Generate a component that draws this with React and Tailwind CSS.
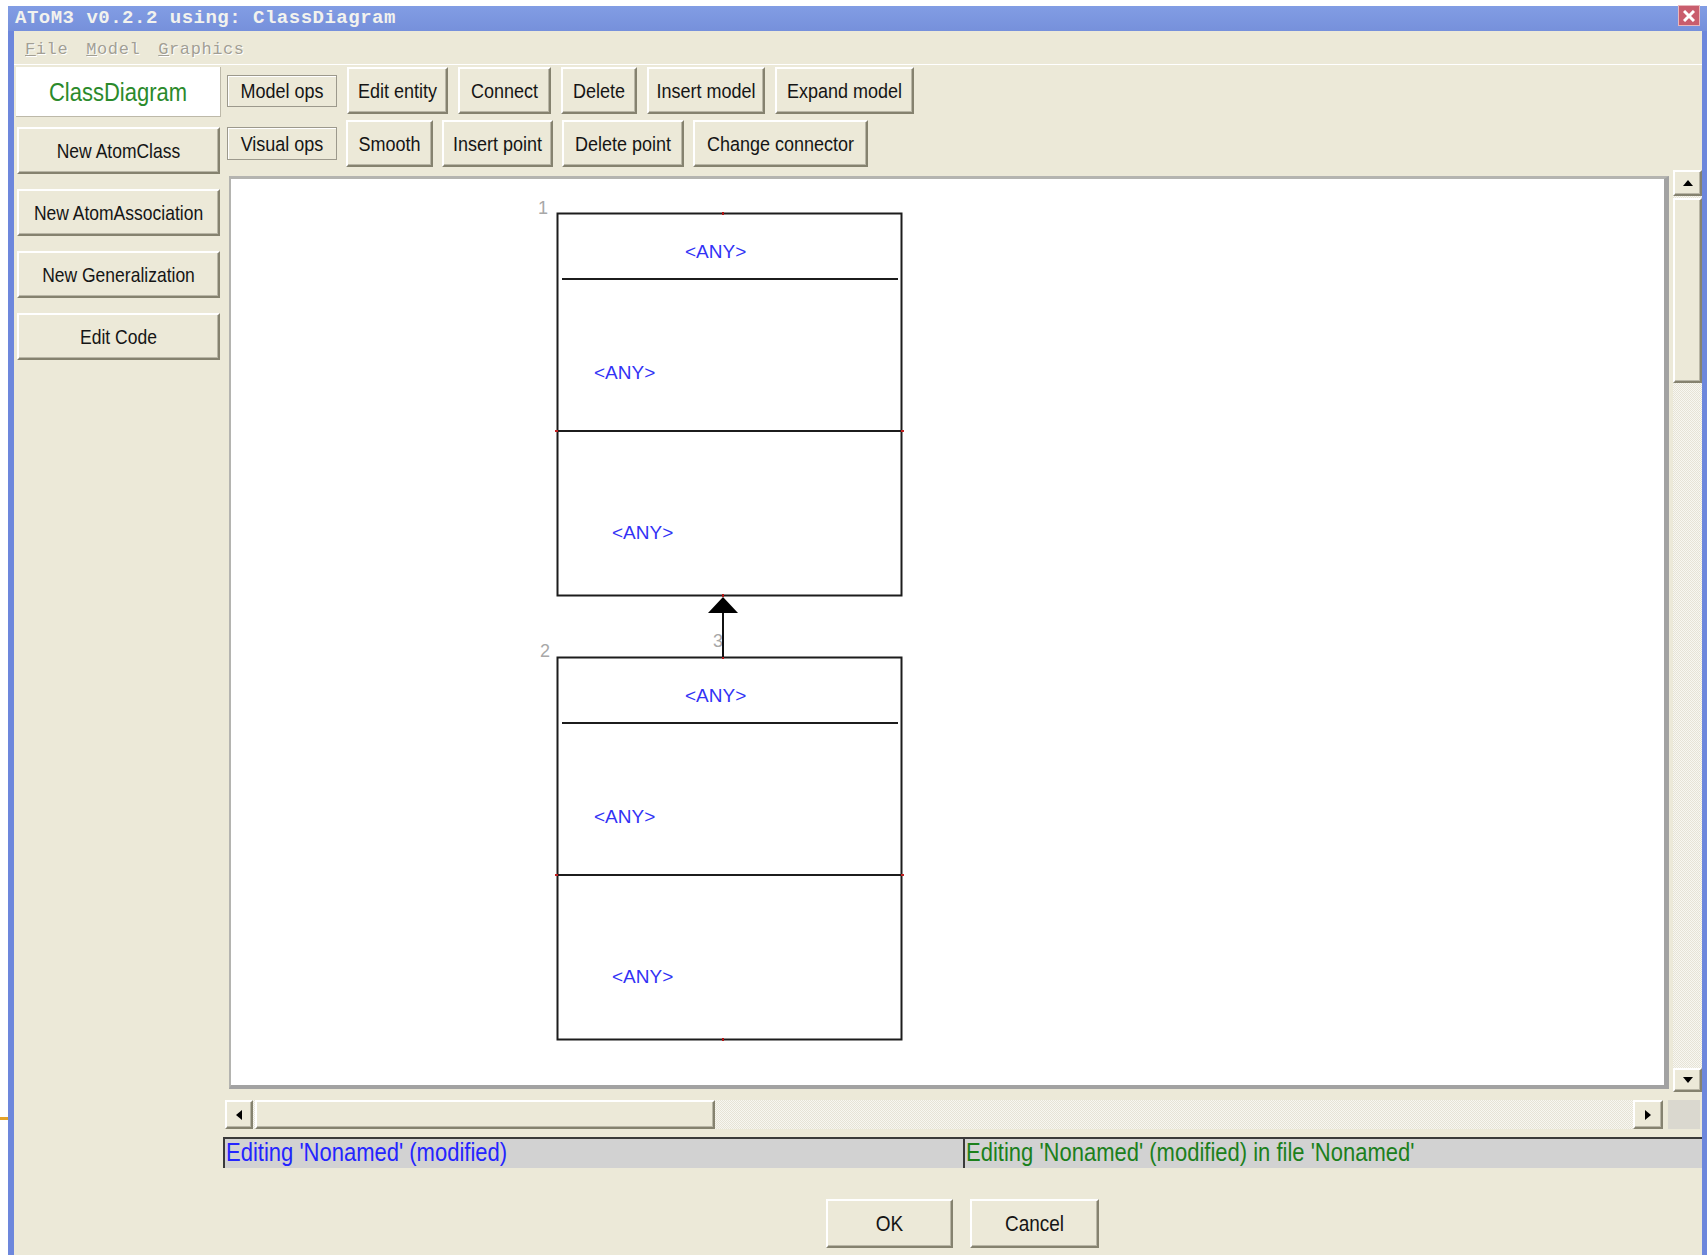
import React from 'react'

const raised =
  'flex items-center justify-center bg-[#ece9d8] border-2 border-t-white border-l-white border-r-[#85826f] border-b-[#85826f] shadow-[inset_-1px_-1px_0_#b9b6a6] text-[#151515]'

const groove =
  'flex items-center justify-center bg-[#ece9d8] border border-[#9c998c] shadow-[inset_1px_1px_0_#ffffff] text-[#151515]'

const track =
  'bg-[repeating-conic-gradient(#e6e3d6_0_25%,#f8f7f1_0_50%)] bg-[length:2px_2px]'

// Tk labels render a bit taller than plain Arial
const tall = 'inline-block scale-y-[1.15] translate-y-[1px] whitespace-nowrap'

const modelRow = [
  ['Edit entity', 101],
  ['Connect', 93],
  ['Delete', 76],
  ['Insert model', 118],
  ['Expand model', 139],
]

const visualRow = [
  ['Smooth', 87],
  ['Insert point', 111],
  ['Delete point', 122],
  ['Change connector', 175],
]

const sideButtons = ['New AtomClass', 'New AtomAssociation', 'New Generalization', 'Edit Code']

function Arrow({ dir }) {
  const pts = {
    up: '0,6 5,0 10,6',
    down: '0,0 10,0 5,6',
    left: '6,0 6,10 0,5',
    right: '0,0 0,10 6,5',
  }[dir]
  const vertical = dir === 'up' || dir === 'down'
  return (
    <svg width={vertical ? 10 : 6} height={vertical ? 6 : 10}>
      <polygon points={pts} fill="#000" />
    </svg>
  )
}

function ClassBox({ top }) {
  const ink = '#1c1c1c'
  return (
    <g>
      <rect x="557.5" y={top + 0.5} width="344" height="382" fill="none" stroke={ink} strokeWidth="2" />
      <line x1="562" x2="898" y1={top + 66} y2={top + 66} stroke={ink} strokeWidth="2" />
      <line x1="557" x2="902" y1={top + 218} y2={top + 218} stroke={ink} strokeWidth="2" />
      <rect x="722" y={top - 1} width="2" height="3" fill="#b01515" />
      <rect x="555" y={top + 217} width="3" height="2" fill="#c02020" />
      <rect x="901" y={top + 217} width="3" height="2" fill="#c02020" />
      <rect x="722" y={top + 381} width="2" height="3" fill="#b01515" />
      <g fontFamily="'Liberation Sans', Arial, sans-serif" fontSize="19" fill="#3232f5">
        <text x="685" y={top + 45}>&lt;ANY&gt;</text>
        <text x="594" y={top + 166}>&lt;ANY&gt;</text>
        <text x="612" y={top + 326}>&lt;ANY&gt;</text>
      </g>
    </g>
  )
}

function Diagram() {
  return (
    <svg className="absolute left-0 top-0" width="1433" height="906">
      <g transform="translate(-231 -179)">
        <g fontFamily="'Liberation Sans', Arial, sans-serif" fontSize="18" fill="#a8a8a8">
          <text x="538" y="214">1</text>
          <text x="540" y="657">2</text>
          <text x="713" y="647">3</text>
        </g>
        <ClassBox top={213} />
        <ClassBox top={657} />
        <line x1="723" x2="723" y1="610" y2="657" stroke="#111" strokeWidth="2" />
        <polygon points="723,597 708,613 738,613" fill="#000" />
      </g>
    </svg>
  )
}

function Window() {
  return (
    <div className="flex-1 flex flex-col">
      {/* title bar */}
      <div className="h-[25px] flex items-start justify-between bg-gradient-to-b from-[#829de4] to-[#7690db] pl-[7px] pr-[7px]">
        <span className="mt-[2px] font-['Liberation_Mono',monospace] font-bold text-[19px] leading-[20px] tracking-[0.5px] text-[#f2f2ee]">
          AToM3 v0.2.2 using: ClassDiagram
        </span>
        <div className="-mt-[1px] w-[22px] h-[21px] flex items-center justify-center bg-[#c95d6d] border border-[#e9b7bd]">
          <svg width="12" height="12">
            <path d="M1 1 L11 11 M11 1 L1 11" stroke="#fff" strokeWidth="3" />
          </svg>
        </div>
      </div>

      <div className="flex-1 flex flex-col bg-[#ece9d8] border-l-[6px] border-r-[5px] border-[#6d87dc]">
        {/* menu */}
        <div className="h-[33px] flex items-center pl-[11px] pt-[4px] font-['Liberation_Mono',monospace] text-[17px] tracking-[0.6px] text-[#a29f94] [text-shadow:1px_1px_0_#ffffff]">
          <span><span className="underline">F</span>ile</span>
          <span className="ml-[18px]"><span className="underline">M</span>odel</span>
          <span className="ml-[18px]"><span className="underline">G</span>raphics</span>
        </div>
        <div className="h-[1px] bg-white" />

        <div className="flex flex-1">
          {/* left column */}
          <div className="w-[209px] flex flex-col pl-[2px] pt-[2px]">
            <div className="w-[205px] h-[50px] flex items-center justify-center bg-white border-r border-b border-[#bdb9a9] text-[22px] text-[#2b8a2b]">
              <span className={tall}>ClassDiagram</span>
            </div>
            <div className="mt-[10px] pl-[1px] flex flex-col gap-[15px]">
              {sideButtons.map((label) => (
                <div key={label} className={`${raised} w-[203px] h-[47px] text-[17.5px]`}>
                  <span className={tall}>{label}</span>
                </div>
              ))}
            </div>
          </div>

          {/* right column */}
          <div className="flex-1 flex flex-col pt-[2px]">
            <div className="h-[47px] flex items-center pl-[4px] gap-[10px] text-[18px]">
              <div className={`${groove} w-[110px] h-[32px]`}>
                <span className={tall}>Model ops</span>
              </div>
              {modelRow.map(([label, w]) => (
                <div key={label} className={`${raised} h-[47px]`} style={{ width: w }}>
                  <span className={tall}>{label}</span>
                </div>
              ))}
            </div>
            <div className="mt-[6px] h-[47px] flex items-center pl-[4px] gap-[9px] text-[18px]">
              <div className={`${groove} w-[110px] h-[33px]`}>
                <span className={tall}>Visual ops</span>
              </div>
              {visualRow.map(([label, w]) => (
                <div key={label} className={`${raised} h-[47px]`} style={{ width: w }}>
                  <span className={tall}>{label}</span>
                </div>
              ))}
            </div>

            {/* canvas + vertical scrollbar */}
            <div className="mt-[3px] h-[922px] flex">
              <div className="ml-[6px] mt-[6px] w-[1440px] h-[913px] relative bg-white border-l-2 border-t-[3px] border-r-[5px] border-b-[4px] border-l-[#b4b4b0] border-t-[#b4b4b0] border-r-[#a2a2a2] border-b-[#a2a2a2] overflow-hidden">
                <Diagram />
              </div>
              <div className={`ml-[4px] w-[29px] h-full flex flex-col ${track}`}>
                <div className={`${raised} h-[26px]`}>
                  <Arrow dir="up" />
                </div>
                <div className={`${raised} mt-[2px] h-[185px]`} />
                <div className="flex-1" />
                <div className={`${raised} h-[24px]`}>
                  <Arrow dir="down" />
                </div>
              </div>
            </div>

            {/* horizontal scrollbar */}
            <div className="mt-[8px] h-[29px] flex">
              <div className={`ml-[2px] w-[1438px] h-full flex ${track}`}>
                <div className={`${raised} w-[28px]`}>
                  <Arrow dir="left" />
                </div>
                <div className={`${raised} ml-[2px] w-[460px]`} />
                <div className="flex-1" />
                <div className={`${raised} w-[30px]`}>
                  <Arrow dir="right" />
                </div>
              </div>
              <div className="ml-[5px] w-[32px] h-full bg-[#dad8cf]" />
            </div>

            {/* status line */}
            <div className="mt-[8px] h-[31px] flex text-[22px] leading-[26px]">
              <div className="w-[740px] h-full bg-[#d2d2d2] border-t-2 border-l-2 border-[#3a3a3a] pl-[1px] text-[#2424ff] overflow-hidden">
                <span className={tall}>Editing 'Nonamed' (modified)</span>
              </div>
              <div className="flex-1 h-full bg-[#d2d2d2] border-t-2 border-l-2 border-[#3a3a3a] pl-[1px] text-[#1c801c] overflow-hidden">
                <span className={tall}>Editing 'Nonamed' (modified) in file 'Nonamed'</span>
              </div>
            </div>

            <div className="mt-[31px] flex justify-center gap-[17px] text-[19px]">
              <div className={`${raised} w-[127px] h-[49px]`}>
                <span className={tall}>OK</span>
              </div>
              <div className={`${raised} w-[129px] h-[49px]`}>
                <span className={tall}>Cancel</span>
              </div>
            </div>
          </div>
        </div>
      </div>
    </div>
  )
}

export default function App() {
  return (
    <div className="w-[1707px] h-[1255px] bg-white relative overflow-hidden flex pl-[8px] pt-[6px] font-['Liberation_Sans',Arial,sans-serif]">
      <div className="absolute left-0 top-[1117px] w-[8px] h-[3px] bg-[#e3a32a]" />
      <Window />
    </div>
  )
}
